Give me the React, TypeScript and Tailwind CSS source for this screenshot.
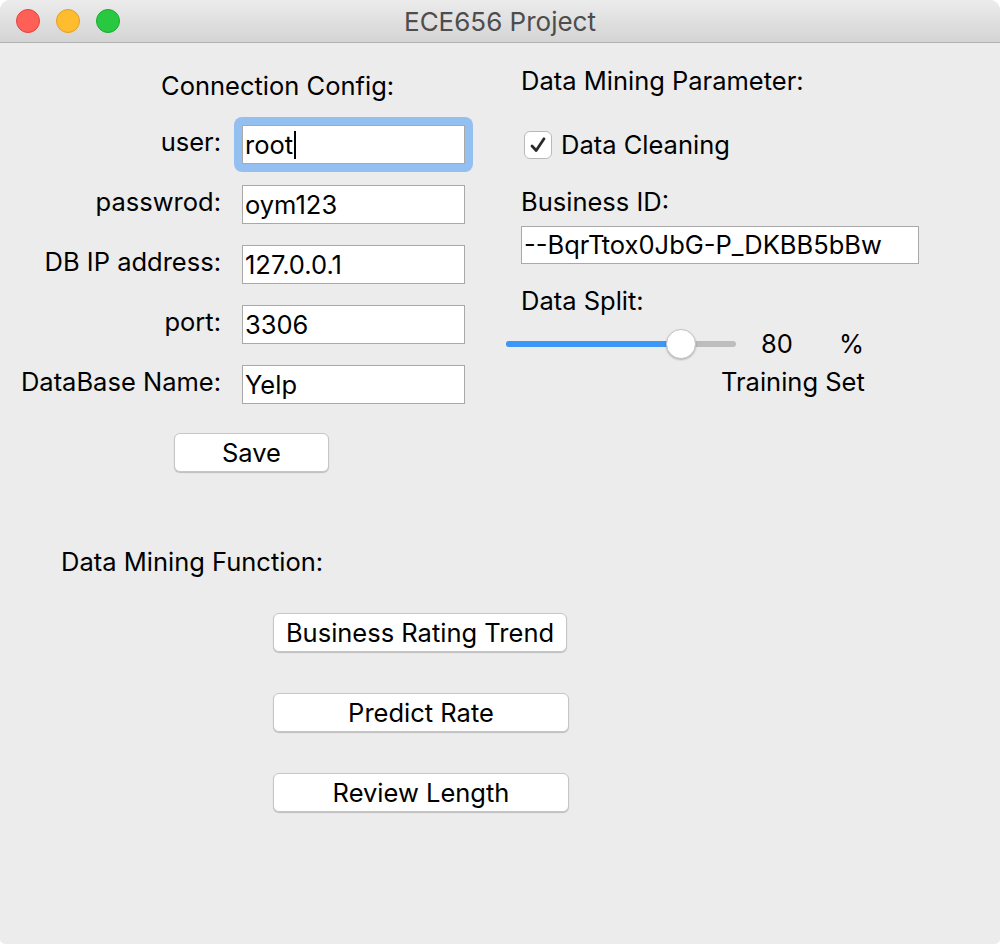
import React from "react";

const font = { fontFamily: "Inter, 'Liberation Sans', sans-serif" };

function Field({ label, value, focused }: { label: string; value: string; focused?: boolean }) {
	const input = (
		<div className="w-[223px] h-[39px] bg-white border border-[#a9a9a9] flex items-center px-[2px] text-[25.5px] leading-[30px] text-black">
			{value}
			{focused && <span className="inline-block w-[2px] h-[28px] bg-black ml-[1px]" />}
		</div>
	);
	return (
		<div className="flex items-center h-[39px]">
			<div className="w-[221px] pb-[5px] text-right text-[25.5px] leading-[30px] text-black">{label}</div>
			<div className="ml-[21px]">
				{focused ? (
					<div className="-m-[8px] p-[8px] rounded-[8px] bg-[#94bff1]">{input}</div>
				) : (
					input
				)}
			</div>
		</div>
	);
}

function MacButton({ label, className }: { label: string; className: string }) {
	return (
		<button
			className={`h-[39px] bg-white rounded-[6px] border border-[#c6c6c6] shadow-[0_1px_1px_rgba(0,0,0,0.2)] text-[25.5px] leading-[30px] text-black flex items-center justify-center ${className}`}
		>
			{label}
		</button>
	);
}

export default function App() {
	return (
		<div className="w-[1000px] h-[944px] bg-white" style={font}>
			<div className="w-full h-full rounded-t-[10px] rounded-b-[5px] overflow-hidden bg-[#ececec] flex flex-col">
				{/* title bar */}
				<div className="h-[43px] shrink-0 bg-gradient-to-b from-[#ececec] to-[#d4d4d4] border-b border-[#b1b1b1] flex items-center relative">
					<div className="flex gap-[16px] pl-[16px]">
						<span className="w-[24px] h-[24px] rounded-full bg-[#fe5f57] border border-[#e0443e]" />
						<span className="w-[24px] h-[24px] rounded-full bg-[#febc2e] border border-[#dea123]" />
						<span className="w-[24px] h-[24px] rounded-full bg-[#28c840] border border-[#1aab29]" />
					</div>
					<div className="absolute inset-0 flex items-center justify-center pt-[1px] text-[26px] text-[#4d4d4d] pointer-events-none">
						ECE656 Project
					</div>
				</div>

				{/* content */}
				<div className="flex flex-1">
					{/* left column */}
					<div className="w-[506px] flex flex-col">
						<div className="pl-[161px] pt-[28px] text-[25.5px] leading-[30px] text-black">Connection Config:</div>
						<div className="mt-[24px] flex flex-col gap-[21px]">
							<Field label="user:" value="root" focused />
							<Field label="passwrod:" value="oym123" />
							<Field label="DB IP address:" value="127.0.0.1" />
							<Field label="port:" value="3306" />
							<Field label="DataBase Name:" value="Yelp" />
						</div>
						<MacButton label="Save" className="mt-[29px] ml-[174px] w-[155px]" />
						<div className="mt-[75px] pl-[61px] text-[25.5px] leading-[30px] text-black">Data Mining Function:</div>
						<div className="mt-[36px] flex flex-col gap-[41px]">
							<MacButton label="Business Rating Trend" className="ml-[273px] w-[294px]" />
							<MacButton label="Predict Rate" className="ml-[273px] w-[296px]" />
							<MacButton label="Review Length" className="ml-[273px] w-[296px]" />
						</div>
					</div>

					{/* right column */}
					<div className="flex-1 flex flex-col">
						<div className="pl-[15px] pt-[23px] text-[25.5px] leading-[30px] text-black">Data Mining Parameter:</div>
						<div className="mt-[34px] pl-[18px] flex items-center h-[30px]">
							<span className="w-[28px] h-[28px] rounded-[6px] bg-white border border-[#b9b9b9] flex items-center justify-center">
								<svg width="20" height="20" viewBox="0 0 20 20" fill="none">
									<path d="M4 11 L8.2 15.5 L16 3.8" stroke="#2a2a2a" strokeWidth="2.8" strokeLinecap="round" strokeLinejoin="round" />
								</svg>
							</span>
							<span className="ml-[9px] text-[25.5px] leading-[30px] text-black">Data Cleaning</span>
						</div>
						<div className="mt-[27px] pl-[15px] text-[25.5px] leading-[30px] text-black">Business ID:</div>
						<div className="mt-[9px] ml-[15px] w-[398px] h-[38px] bg-white border border-[#a9a9a9] flex items-center px-[2px] text-[25.5px] leading-[30px] text-black">
							--BqrTtox0JbG-P_DKBB5bBw
						</div>
						<div className="mt-[22px] pl-[15px] text-[25.5px] leading-[30px] text-black">Data Split:</div>
						<div className="mt-[13px] flex items-center h-[30px]">
							<div className="relative w-[230px] h-[6px] rounded-full bg-[#bdbdbd]">
								<div className="absolute left-0 top-0 h-[6px] w-[175px] rounded-full bg-[#3b96f7]" />
								<div className="absolute left-[160px] top-[-12px] w-[30px] h-[30px] rounded-full bg-white border border-[#c4c4c4] shadow-[0_1px_2px_rgba(0,0,0,0.25)]" />
							</div>
							<span className="ml-[25px] w-[78px] text-[25.5px] leading-[30px] text-black">80</span>
							<span className="text-[25.5px] leading-[30px] text-black">%</span>
						</div>
						<div className="mt-[8px] pl-[215px] text-[25.5px] leading-[30px] text-black">Training Set</div>
					</div>
				</div>
			</div>
		</div>
	);
}
